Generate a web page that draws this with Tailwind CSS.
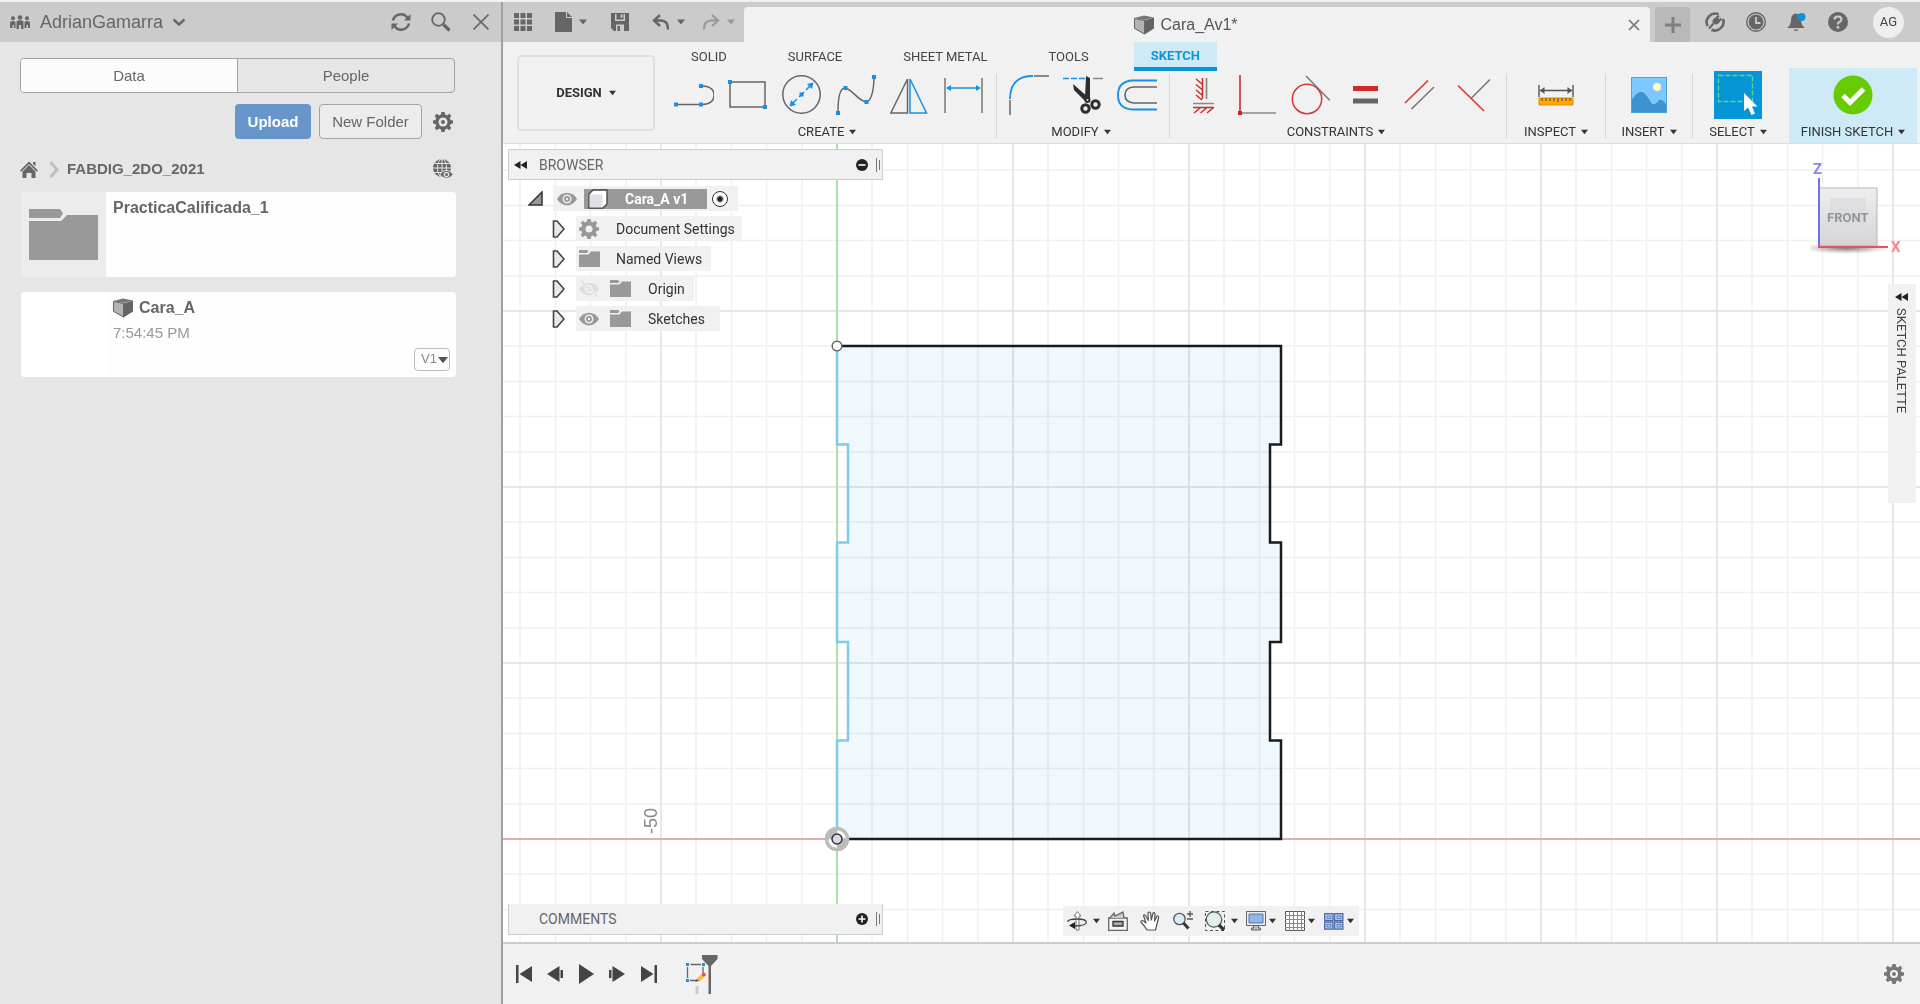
<!DOCTYPE html>
<html lang="en">
<head>
<meta charset="utf-8">
<meta name="viewport" content="width=device-width, initial-scale=1">
<title>Cara_A v1</title>
<script src="https://cdn.jsdelivr.net/npm/@tailwindcss/browser@4"></script>
</head>
<body class="flex min-h-screen bg-[#f1f1f1] pt-[2px] font-['Roboto','Liberation_Sans',sans-serif] text-sm text-[#333]">

<!-- Shared icon shapes -->
<svg class="hidden">
  <symbol id="caret" viewBox="0 0 8 6"><path d="M0 0.5H8L4 5.5Z" fill="currentColor"/></symbol>
  <symbol id="part" viewBox="0 0 20 20"><path d="M0 3L10 0.5L20 2.5L10.5 5Z" fill="#777"/><path d="M0 3L10.5 5.5V19.5L0 13.5Z" fill="#b3b3b3"/><path d="M10.5 5.5L20 2.5V13.5L10.5 19.5Z" fill="#636363"/><path d="M0.5 3.5L10.5 5.5V19L0.5 13.2Z" fill="none" stroke="#666"/></symbol>
  <symbol id="gear" viewBox="0 0 20 20"><path d="M8.4 0h3.2l.5 2.6 1.8.8 2.3-1.6 2.1 2.2-1.5 2.2.7 1.8 2.5.5v3l-2.5.5-.7 1.8 1.5 2.2-2.1 2.2-2.3-1.6-1.8.8-.5 2.6H8.400l-.5-2.600-1.800-.8-2.300 1.600L1.700 16l1.500-2.200-.7-1.800L0 11.500v-3L2.500 8l.7-1.800L1.700 4l2.100-2.200 2.300 1.600 1.800-.8Z" fill="currentColor"/></symbol>
  <symbol id="eye" viewBox="0 0 20 14"><path d="M0 7C5-1.500 15-1.500 20 7C15 15.500 5 15.500 0 7Z" fill="#999"/><circle cx="10" cy="7" r="4.500" fill="#eee"/><circle cx="10" cy="7" r="3" fill="#999"/><circle cx="10" cy="7" r="1.200" fill="#eee"/></symbol>
  <symbol id="folder" viewBox="0 0 21 17"><path d="M0 0H8L9.500 1.500L8 3H0Z" fill="#999"/><path d="M0 4.500H9.500L12 1.500H21V17H0Z" fill="#999"/></symbol>
  <symbol id="expand" viewBox="0 0 13 18"><path d="M1.500 1H5L12 9L5 17H1.500Z" fill="#e8e8ee" stroke="#444" stroke-width="1.600"/></symbol>
  <symbol id="rewind" viewBox="0 0 13 8"><path d="M6.500 0V8L0 4ZM13 0V8L6.500 4Z" fill="#222"/></symbol>
</svg>

<!-- Data panel -->
<aside class="flex w-[503px] shrink-0 flex-col border-r-2 border-[#a0a0a0] bg-[#e6e6e6] font-['Liberation_Sans',sans-serif] text-[15px] text-[#666]">
  <header class="flex h-10 items-center bg-[#cbcbcb] pr-3 pl-[10px]">
    <svg class="h-[14px] w-5" viewBox="0 0 20 14" fill="#666"><circle cx="10" cy="2.500" r="2.300"/><circle cx="3" cy="3.300" r="2"/><circle cx="17" cy="3.300" r="2"/><path d="M6.500 6.500Q10 4 13.500 6.500V14H11V10H9V14H6.500ZM0 7Q3 5 5.500 7V13H4V10H2.500V13H0ZM14.500 7Q17 5 20 7V13H18V10H16.500V13H14.500Z"/></svg>
    <button class="ml-[10px] flex items-center gap-[9px] text-lg">AdrianGamarra
      <svg class="h-2 w-[14px]" viewBox="0 0 14 8" fill="none" stroke="#666" stroke-width="2.400"><path d="M1.500 1.500L7 6.500L12.500 1.500"/></svg>
    </button>
    <button class="ml-auto" aria-label="Refresh"><svg class="size-5" viewBox="0 0 20 20" fill="none" stroke="#666" stroke-width="2.400"><path d="M2 8.500A8 8 0 0 1 16.500 6M18 11.500A8 8 0 0 1 3.500 14"/><path d="M19.500 2V8.500H13ZM.5 18V11.500H7Z" fill="#666" stroke="none"/></svg></button>
    <button class="ml-5" aria-label="Search"><svg class="size-5" viewBox="0 0 20 20" fill="none" stroke="#666"><circle cx="7.500" cy="7.500" r="6.300" stroke-width="1.800"/><path d="M12.500 12.500L18.500 18.500" stroke-width="3.200"/></svg></button>
    <button class="ml-[22px]" aria-label="Close panel"><svg class="size-4" viewBox="0 0 16 16" stroke="#666" stroke-width="1.600"><path d="M.5.5L15.500 15.500M15.500.5L.5 15.500"/></svg></button>
  </header>

  <div class="flex flex-col pt-4 pr-[46px] pl-5">
    <div class="flex h-[35px] overflow-hidden rounded border border-[#a3a3a3]">
      <button class="flex-1 bg-[#fcfcfc]">Data</button>
      <button class="flex-1 border-l border-[#a3a3a3]">People</button>
    </div>
    <div class="mt-[11px] flex items-center justify-end gap-2 pr-0.5">
      <button class="h-[35px] w-[76px] rounded bg-[#6996ca] font-bold text-white">Upload</button>
      <button class="h-[35px] w-[103px] rounded border border-[#a3a3a3] bg-[#ececec]">New Folder</button>
      <button class="ml-[3px]" aria-label="Settings"><svg class="size-5"><use href="#gear"/><circle cx="10" cy="10" r="4.500" fill="#e6e6e6"/><circle cx="10" cy="10" r="2" fill="#666"/></svg></button>
    </div>
    <nav class="mt-[18px] flex h-6 items-center pr-0.5 font-bold">
      <a href="#" aria-label="Home"><svg class="h-[17px] w-[18px]" viewBox="0 0 18 17" fill="#666"><path d="M9 .5L18 9.500L16.800 10.700L9 3L1.200 10.700L0 9.500Z"/><path d="M13 1H15.500V5L13 3Z"/><path d="M9 4L15.500 10.500V17H11.500V12H6.500V17H2.500V10.500Z"/></svg></a>
      <svg class="ml-[11px] h-[17px] w-[10px]" viewBox="0 0 10 17" fill="none" stroke="#bfbfbf" stroke-width="3"><path d="M1.500 1L8 8.500L1.500 16"/></svg>
      <a href="#" class="ml-2">FABDIG_2DO_2021</a>
      <button class="ml-auto" aria-label="Web view"><svg class="size-5" viewBox="0 0 20 20"><circle cx="9" cy="9" r="9" fill="#666"/><g fill="none" stroke="#e6e6e6"><ellipse cx="9" cy="9" rx="4.500" ry="9"/><path d="M9 0V18M0 9H18M1.500 4.500H16.500M1.500 13.500H16.500"/></g><path d="M7 15.500C10 10 17 10 20 15.500C17 20.500 10 20.500 7 15.500Z" fill="#666" stroke="#e6e6e6"/><circle cx="13.500" cy="15.500" r="2.800" fill="#e6e6e6"/><circle cx="13.500" cy="15.500" r="1.500" fill="#666"/></svg></button>
    </nav>
    <ul class="mt-[11px] -mr-px ml-px flex flex-col gap-[15px]">
      <li class="flex h-[85px] overflow-hidden rounded-sm bg-[#fdfdfd]">
        <div class="flex w-[85px] items-center justify-center bg-[#ececec]"><svg class="h-[51px] w-[69px]" viewBox="0 0 69 51" fill="#999"><path d="M0 0H31L34 4.500L31 9H0ZM0 12H32L38 6H69V51H0Z"/></svg></div>
        <h2 class="px-[7px] py-1.5 text-base leading-5 font-bold">PracticaCalificada_1</h2>
      </li>
      <li class="flex h-[85px] overflow-hidden rounded-sm bg-[#fdfdfd]">
        <div class="w-[85px] bg-white"></div>
        <div class="flex flex-1 flex-col pt-1.5 pr-1.5 pb-1.5 pl-[7px]">
          <h2 class="flex items-center gap-1.5 text-base leading-5 font-bold"><svg class="size-5"><use href="#part"/></svg>Cara_A</h2>
          <p class="mt-[5px] leading-5 text-[#999]">7:54:45 PM</p>
          <label class="mt-auto ml-auto flex h-[23px] w-9 shrink-0 items-center rounded-sm border border-[#bbb] pl-[6px] text-[13px] text-[#888]">
            <select aria-label="Version" class="w-[17px] appearance-none bg-transparent"><option>V1</option></select>
            <svg class="h-2 w-[10px] text-[#555]"><use href="#caret"/></svg>
          </label>
        </div>
      </li>
    </ul>
  </div>
</aside>

<main class="flex min-w-0 flex-1 flex-col">
  <!-- Application bar -->
  <header class="flex h-10 items-center bg-[#cbcbcb] text-[#666]">
    <div class="flex w-[241px] shrink-0 items-center pl-[11px]">
      <button aria-label="Show data panel"><svg class="size-[18px]" viewBox="0 0 18 18" fill="currentColor"><path d="M0 1a1 1 0 0 1 1-1H5V5H0ZM6.500 0H11.500V5H6.500ZM13 0H17a1 1 0 0 1 1 1V5H13ZM0 6.500H5V11.500H0ZM6.500 6.500H11.500V11.500H6.500ZM13 6.500H18V11.500H13ZM0 13H5V18H1a1 1 0 0 1-1-1ZM6.500 13H11.500V18H6.500ZM13 13H18V17a1 1 0 0 1-1 1H13Z"/></svg></button>
      <button class="ml-[23px] flex items-center gap-[7px]" aria-label="File"><svg class="h-5 w-[17px]" viewBox="0 0 17 20" fill="currentColor"><path d="M0 0H11V6H17V20H0Z"/><path d="M12 0L17 5H12Z"/></svg><svg class="h-1.5 w-2"><use href="#caret"/></svg></button>
      <button class="ml-6" aria-label="Save"><svg class="size-[18px]" viewBox="0 0 18 18"><path d="M0 0H18V18H3L0 15Z" fill="currentColor"/><path d="M4 1H14V8H4ZM5 11.500H13V18H5Z" fill="#cbcbcb"/><path d="M5.500 1H12.500V6.500H5.500ZM6.500 13H9V18H6.500Z" fill="currentColor"/><path d="M9.500 1.500H11.500V4.500H9.500Z" fill="#cbcbcb"/></svg></button>
      <button class="ml-[23px] flex items-center gap-[7px]" aria-label="Undo"><svg class="h-4 w-[18px]" viewBox="0 0 18 16" fill="none" stroke="currentColor" stroke-width="2.500"><path d="M8 1L2 6.500L8 12M2.500 6.500H9Q16 6.500 16 15.500"/></svg><svg class="h-1.5 w-2"><use href="#caret"/></svg></button>
      <button class="ml-[17px] flex items-center gap-[7px] text-[#999]" aria-label="Redo"><svg class="h-4 w-[18px]" viewBox="0 0 18 16" fill="none" stroke="currentColor" stroke-width="2.200"><path d="M10 1L16 6.500L10 12M15.500 6.500H9Q2 6.500 2 15.500"/></svg><svg class="h-1.5 w-2"><use href="#caret"/></svg></button>
    </div>
    <div class="flex h-[35px] flex-1 items-center self-end rounded-t bg-[#f1f1f1] pr-2.5">
      <div class="flex flex-1 items-center justify-center gap-1.5 font-['Liberation_Sans',sans-serif] text-base text-[#555]"><svg class="size-5"><use href="#part"/></svg>Cara_Av1*</div>
      <button aria-label="Close tab"><svg class="size-3" viewBox="0 0 12 12" stroke="#777" stroke-width="1.700"><path d="M1 1L11 11M11 1L1 11"/></svg></button>
    </div>
    <button class="ml-[5px] flex h-[35px] w-[35px] items-center justify-center self-end rounded-t bg-[#b9b9b9]" aria-label="New tab"><svg class="size-4" viewBox="0 0 16 16" stroke="#808080" stroke-width="3"><path d="M8 0V16M0 8H16"/></svg></button>
    <div class="flex items-center gap-[21px] pr-4 pl-[15px]">
      <button aria-label="Extensions"><svg class="size-5" viewBox="0 0 20 20" fill="none" stroke="currentColor"><path d="M13.500 2.200A8.600 8.600 0 0 0 2.600 14M6.500 17.800A8.600 8.600 0 0 0 18 7" stroke-width="2.600"/><path d="M9 6.500L12 4.500L15.500 8.500L13.500 11.500Q10.500 13.500 8 11Q6.500 8.500 9 6.500Z" fill="currentColor" stroke="none"/><path d="M11.500 6L14 3.500M14 9L16.500 6.500M8.500 11.500L4 16.500" stroke-width="2"/></svg></button>
      <button aria-label="Job status"><svg class="size-5" viewBox="0 0 20 20"><circle cx="10" cy="10" r="9.300" fill="none" stroke="currentColor" stroke-width="1.400"/><circle cx="10" cy="10" r="7.400" fill="currentColor"/><path d="M10 5V11H14.500" fill="none" stroke="#cbcbcb" stroke-width="1.800"/></svg></button>
      <button aria-label="Notifications"><svg class="size-5" viewBox="0 0 20 20"><path d="M9 1.500Q14 2 14 8Q14 13 18 16H0Q4 13 4 8Q4 2 9 1.500ZM6.500 17.500H11.500Q9 20.500 6.500 17.500Z" fill="currentColor"/><circle cx="14.500" cy="5" r="4" fill="#0696d7"/></svg></button>
      <button aria-label="Help"><svg class="size-5" viewBox="0 0 20 20"><circle cx="10" cy="10" r="10" fill="currentColor"/><path d="M6.500 7.500Q6.500 4.500 10 4.500T13.500 7.500Q13.500 9 11.500 10T10 12.500" fill="none" stroke="#cbcbcb" stroke-width="2.200"/><circle cx="10" cy="15.300" r="1.400" fill="#cbcbcb"/></svg></button>
      <button class="ml-1 size-[31px] rounded-full bg-[#eee] text-[13px] text-[#444]">AG</button>
    </div>
  </header>

  <!-- Ribbon -->
  <div class="flex h-[102px] shrink-0 overflow-hidden border-b border-[#ddd] bg-[#f1f1f1]">
    <button class="mt-[13px] ml-[14px] flex h-[76px] w-[138px] shrink-0 items-center justify-center gap-[7px] rounded border-2 border-[#e0e0e0] text-[13px] font-bold">DESIGN <svg class="h-1.5 w-[7px]"><use href="#caret"/></svg></button>
    <div class="ml-3 flex flex-1 flex-col text-[13px]">
      <nav class="ml-2 flex h-[30px] gap-[29px] text-[#444]">
        <a href="#" class="flex items-center px-4 pt-px">SOLID</a>
        <a href="#" class="flex items-center px-4 pt-px">SURFACE</a>
        <a href="#" class="flex items-center px-4 pt-px">SHEET METAL</a>
        <a href="#" class="flex items-center px-4 pt-px">TOOLS</a>
        <a href="#" class="flex items-center border-b-4 border-[#0696d7] bg-[#cdeaf6] px-[17px] pt-1 font-bold text-[#0b98d9]">SKETCH</a>
      </nav>
      <div class="flex flex-1">
        <section class="w-[324px] shrink-0">
          <div class="flex h-12 items-center">
            <button class="flex w-[54px] justify-center" aria-label="Line"><svg class="size-10" viewBox="0 0 40 40"><path d="M2 29.500H27Q40 29.500 40 20Q40 11 27 11" fill="none" stroke="#666" stroke-width="1.500"/><path d="M0 27.500h4v4h-4zM25 27.500h4v4h-4zM25 9h4v4h-4z" fill="#1890e8"/></svg></button>
            <button class="flex w-[54px] justify-center" aria-label="Rectangle"><svg class="size-10" viewBox="0 0 40 40"><path d="M2 7H37V32H2Z" fill="none" stroke="#666" stroke-width="1.500"/><path d="M0 5h4v4H0zM35 30h4v4h-4z" fill="#1890e8"/></svg></button>
            <button class="flex w-[54px] justify-center" aria-label="Circle"><svg class="size-10" viewBox="0 0 40 40"><circle cx="19.500" cy="19.500" r="18.700" fill="none" stroke="#666" stroke-width="1.500"/><path d="M10 29L29 10" stroke="#1890e8" stroke-width="1.500" stroke-dasharray="7 3"/><path d="M31.500 7.500L30 14L25 9ZM7.500 31.500L9 25L14 30ZM17.500 17.500h4v4h-4z" fill="#1890e8"/></svg></button>
            <button class="flex w-[54px] justify-center" aria-label="Spline"><svg class="size-10" viewBox="0 0 40 40"><path d="M2 37Q2 13 9 13C15 13 21 25 30 27Q37 26 38 4" fill="none" stroke="#666" stroke-width="1.500"/><path d="M0 36h4v4H0zM7.500 11h4v4h-4zM28.500 25h4v4h-4zM36 0h4v4h-4z" fill="#1890e8"/></svg></button>
            <button class="flex w-[54px] justify-center" aria-label="Mirror"><svg class="size-10" viewBox="0 0 40 40" fill="none" stroke-width="1.500"><path d="M17.500 4V38H0.800Z" stroke="#666"/><path d="M20 4V38H36.500Z" stroke="#1890e8"/></svg></button>
            <button class="flex w-[54px] justify-center" aria-label="Sketch dimension"><svg class="size-10" viewBox="0 0 40 40"><path d="M1 3V38M38 3V38" stroke="#777" stroke-width="1.500"/><path d="M4 13H35" stroke="#1890e8" stroke-width="1.500"/><path d="M2 13L7 10V16ZM37 13L32 10V16Z" fill="#1890e8"/></svg></button>
          </div>
          <button class="flex h-6 w-full items-center justify-center gap-[5px] pt-0.5 pr-1">CREATE <svg class="h-1.5 w-[7px]"><use href="#caret"/></svg></button>
        </section>
        <div class="mx-[5px] mt-[3px] mb-[5px] w-px shrink-0 bg-[#d8d8d8]"></div>
        <section class="w-[162px] shrink-0">
          <div class="flex h-12 items-center">
            <button class="flex w-[54px] justify-center" aria-label="Fillet"><svg class="size-10" viewBox="0 0 40 40" fill="none" stroke-width="1.500"><path d="M1 24Q1 1 24 1" stroke="#1890e8" stroke-width="1.800"/><path d="M25 1H40M1 25V40" stroke="#666"/></svg></button>
            <button class="flex w-[54px] justify-center" aria-label="Trim"><svg class="size-10" viewBox="0 0 40 40" fill="none"><path d="M0 3.500H25" stroke="#1890e8" stroke-width="1.700" stroke-dasharray="6 2"/><path d="M30 3.500H40" stroke="#888" stroke-width="1.500"/><path d="M23 1L27 3V25L22 23ZM10 9L26 23L23 27L11 15Z" fill="#2d2d2d"/><circle cx="22.500" cy="33.500" r="3.700" stroke="#2d2d2d" stroke-width="3"/><circle cx="32.500" cy="29.500" r="3.700" stroke="#2d2d2d" stroke-width="3"/><circle cx="24.500" cy="25" r="3" fill="#2d2d2d"/><circle cx="24.500" cy="25" r="1" fill="#ddd"/></svg></button>
            <button class="flex w-[54px] justify-center" aria-label="Offset"><svg class="size-10" viewBox="0 0 40 40" fill="none" stroke-width="1.600"><path d="M40 5.500H16Q1 6 1 20T16 34.500H40" stroke="#1890e8" stroke-width="1.900"/><path d="M40 12H17Q8 12.500 8 20T17 28H40" stroke="#666"/></svg></button>
          </div>
          <button class="flex h-6 w-full items-center justify-center gap-[5px] pt-0.5 pr-1">MODIFY <svg class="h-1.5 w-[7px]"><use href="#caret"/></svg></button>
        </section>
        <div class="mx-[5px] mt-[3px] mb-[5px] w-px shrink-0 bg-[#d8d8d8]"></div>
        <section class="w-[326px] shrink-0">
          <div class="flex h-12 items-center">
            <button class="flex w-[54px] justify-center" aria-label="Fix"><svg class="size-10" viewBox="0 0 40 40" fill="none" stroke="#cf2a27" stroke-width="1.500"><path d="M20.500 3V24M14 4L20 9M14 9.500L20 14.500M14 15L20 20M14 20L20 25M11 32.500H32M18 33L12 38M24.500 33L18.500 38M31 33L25 38"/><path d="M24.500 3V24M11 28.500H32" stroke="#888" stroke-width="1.700"/></svg></button>
            <button class="flex w-[54px] justify-center" aria-label="Horizontal/Vertical"><svg class="size-10" viewBox="0 0 40 40"><path d="M4 0V36" stroke="#d33" stroke-width="1.700"/><path d="M6 38H40" stroke="#888" stroke-width="1.700"/><path d="M2 36h4v4H2z" fill="#cf2222"/></svg></button>
            <button class="flex w-[54px] justify-center" aria-label="Tangent"><svg class="size-10" viewBox="0 0 40 40" fill="none" stroke-width="1.500"><circle cx="17" cy="24" r="14.700" stroke="#d33a3a"/><path d="M16 1L40 25.500" stroke="#777"/></svg></button>
            <button class="flex w-[54px] justify-center" aria-label="Equal"><svg class="size-10" viewBox="0 0 40 40"><path d="M9 11h25v5H9z" fill="#cf2a27"/><path d="M9 23.500h25v5H9z" fill="#666"/></svg></button>
            <button class="flex w-[54px] justify-center" aria-label="Parallel"><svg class="size-10" viewBox="0 0 40 40" stroke-width="1.600"><path d="M7 28L30 5.500" stroke="#d33"/><path d="M13.500 34L36 12" stroke="#777"/></svg></button>
            <button class="flex w-[54px] justify-center" aria-label="Perpendicular"><svg class="size-10" viewBox="0 0 40 40" stroke-width="1.600"><path d="M6 10.500L32 36" stroke="#d33"/><path d="M19.500 23L38 4.500" stroke="#777"/></svg></button>
          </div>
          <button class="flex h-6 w-full items-center justify-center gap-[5px] pt-0.5 pr-1">CONSTRAINTS <svg class="h-1.5 w-[7px]"><use href="#caret"/></svg></button>
        </section>
        <div class="mx-[5px] mt-[3px] mb-[5px] w-px shrink-0 bg-[#d8d8d8]"></div>
        <button class="w-[88px] shrink-0">
          <span class="flex h-12 items-center justify-center"><svg class="size-10" viewBox="0 0 40 40"><path d="M3 10V22M37 10V22M4 15.500H36" stroke="#555" stroke-width="1.400"/><path d="M4 15.500L8.500 12V19ZM36 15.500L31.500 12V19Z" fill="#555"/><path d="M3 23h34v7H3z" fill="#ffa800" stroke="#e29100"/><path d="M6 23v3M10 23v3M14 23v3M18 23v3M22 23v4M26 23v3M30 23v3M34 23v3" stroke="#444"/></svg></span>
          <span class="flex h-6 items-center justify-center gap-[5px] pt-0.5">INSPECT <svg class="h-1.5 w-[7px]"><use href="#caret"/></svg></span>
        </button>
        <div class="mx-[5px] mt-[3px] mb-[5px] w-px shrink-0 bg-[#d8d8d8]"></div>
        <button class="w-[76px] shrink-0">
          <span class="flex h-12 items-center justify-center"><svg class="size-9" viewBox="0 0 36 36"><path d="M0 0h36v36H0z" fill="#7cc8ff"/><path d="M0 24Q6 14 11 15Q14 15 21 27Q25 28 28 23Q31 22 36 28V36H0Z" fill="#3d93cf"/><circle cx="26" cy="10" r="4" fill="#fdfbd0"/><path d="M.5.5h35v35H.5z" fill="none" stroke="#4aa3dd"/></svg></span>
          <span class="flex h-6 items-center justify-center gap-[5px] pt-0.5">INSERT <svg class="h-1.5 w-[7px]"><use href="#caret"/></svg></span>
        </button>
        <div class="mx-[5px] mt-[3px] mb-[5px] w-px shrink-0 bg-[#d8d8d8]"></div>
        <button class="w-[80px] shrink-0">
          <span class="flex h-12 items-center justify-center"><svg class="size-12" viewBox="0 0 48 48"><path d="M0 0h48v48H0z" fill="#0696d7"/><path d="M4.500 4.500h34v26h-34z" fill="none" stroke="#5cd78a" stroke-width="1.400" stroke-dasharray="5 2"/><path d="M30 22V40L34 36.500L37.500 44L41 42.500L38 35.500H43.500Z" fill="#fff"/></svg></span>
          <span class="flex h-6 items-center justify-center gap-[5px] pt-0.5">SELECT <svg class="h-1.5 w-[7px]"><use href="#caret"/></svg></span>
        </button>
        <button class="-mt-[3px] mr-[3px] ml-auto w-[128px] shrink-0 bg-[#cdeaf6] pt-[3px]">
          <span class="flex h-12 items-center justify-center"><svg class="size-10" viewBox="0 0 40 40"><circle cx="20" cy="20" r="19.500" fill="#66cc00"/><path d="M10 20.500L17 27.500L30.500 14" fill="none" stroke="#fff" stroke-width="5"/></svg></span>
          <span class="flex h-6 items-center justify-center gap-[5px] pt-0.5">FINISH SKETCH <svg class="h-1.5 w-[7px]"><use href="#caret"/></svg></span>
        </button>
      </div>
    </div>
  </div>

  <!-- Modelling canvas -->
  <div class="relative min-h-[640px] flex-1 overflow-hidden bg-white">
    <svg class="absolute inset-0 size-full">
      <defs>
        <pattern id="grid" width="176" height="176" patternUnits="userSpaceOnUse" patternTransform="translate(333 694)">
          <path d="M36 0V176M71.500 0V176M106.500 0V176M142 0V176M0 36H176M0 71.500H176M0 106.500H176M0 142H176" stroke="#f0f0f0" stroke-width="1.500"/>
          <path d="M1 0V176M0 1H176" stroke="#e0e0e0" stroke-width="1.500"/>
        </pattern>
      </defs>
      <path d="M334 202H778V300.500H767V398.500H778V498H767V596.500H778V695H334V596.500H345V498H334V398.500H345V300.500H334Z" fill="#f0f8fe"/>
      <rect width="100%" height="100%" fill="url(#grid)" class="mix-blend-multiply"/>
      <path d="M334 0V798" stroke="#96e296" stroke-width="1.500"/>
      <path d="M0 695H1417" stroke="#d87878" stroke-width="1.200"/>
      <path d="M334 202V300.500H345V398.500H334V498H345V596.500H334V695" fill="none" stroke="#7fcbea" stroke-width="2.500"/>
      <path d="M334 202H778V300.500H767V398.500H778V498H767V596.500H778V695H334" fill="none" stroke="#1a1a1a" stroke-width="2.500"/>
      <circle cx="334" cy="202" r="4.800" fill="#fff" stroke="#666" stroke-width="1.500"/>
      <circle cx="334" cy="695" r="10.500" fill="#fff" fill-opacity=".8" stroke="#bbb" stroke-width="3.500"/>
      <path d="M334 695H346A12 12 0 0 1 334 707ZM334 695H322A12 12 0 0 1 334 683Z" fill="#bbb"/>
      <circle cx="334" cy="695" r="5" fill="#ddd6e6" stroke="#3a3340" stroke-width="1.500"/>
      <text transform="translate(154 690) rotate(-90)" font-size="18" fill="#888" font-family="Liberation Sans, sans-serif">-50</text>
    </svg>

    <!-- Browser tree -->
    <section class="absolute top-[5px] left-[5px] w-[375px] text-[#333]">
      <header class="flex h-[31px] items-center border border-[#ccc] bg-[#f1f1f1] pr-[1px] pl-[5px]">
        <svg class="h-2 w-[13px]"><use href="#rewind"/></svg>
        <h2 class="ml-3 text-[#666]">BROWSER</h2>
        <button class="ml-auto" aria-label="Collapse"><svg class="size-3" viewBox="0 0 12 12"><circle cx="6" cy="6" r="6" fill="#222"/><path d="M2.500 6H9.500" stroke="#fff" stroke-width="1.600"/></svg></button>
        <svg class="ml-2 h-[14px] w-[5px]" viewBox="0 0 5 14" stroke="#777"><path d="M.5 0V14M3.500 2V12"/></svg>
      </header>
      <ul class="flex flex-col gap-[5px] pt-1.5">
        <li class="flex h-[25px] items-center pl-5">
          <svg class="h-[15px] w-[15px]" viewBox="0 0 15 15"><path d="M14 1V14H1Z" fill="#999" stroke="#333" stroke-width="1.500"/></svg>
          <div class="ml-[10px] flex h-full items-center bg-[#f1f1f1] pr-2.5 pl-1">
            <svg class="h-[14px] w-5"><use href="#eye"/></svg>
            <button class="ml-[7px] flex h-5 w-[123px] items-center bg-[#999] pl-1 font-bold text-white"><svg class="size-5" viewBox="0 0 20 20" stroke="#444" stroke-width="1.300" stroke-linejoin="round"><path d="M1 5L5 1H19V15L15 19H1Z" fill="#fff"/><path d="M1.700 5.500H14.500V18.400H1.700Z" fill="#e0e0e8" stroke="none"/></svg><span class="ml-[17px]">Cara_A v1</span></button>
            <input type="radio" checked aria-label="Activate component" class="ml-[5px] size-4 appearance-none rounded-full border border-[#333] bg-white bg-[radial-gradient(circle,#222_2px,transparent_4px)]">
          </div>
        </li>
        <li class="flex h-[25px] items-center pl-[44px]">
          <svg class="h-[18px] w-[13px]"><use href="#expand"/></svg>
          <div class="ml-[11px] flex h-full items-center bg-[#f1f1f1] pr-[7px] pl-[3px]"><svg class="size-5 text-[#999]"><use href="#gear"/><circle cx="10" cy="10" r="3.500" fill="#f1f1f1"/></svg><span class="ml-[17px]">Document Settings</span></div>
        </li>
        <li class="flex h-[25px] items-center pl-[44px]">
          <svg class="h-[18px] w-[13px]"><use href="#expand"/></svg>
          <div class="ml-[11px] flex h-full items-center bg-[#f1f1f1] pr-[9px] pl-[3px]"><svg class="h-[17px] w-[21px]"><use href="#folder"/></svg><span class="ml-4">Named Views</span></div>
        </li>
        <li class="flex h-[25px] items-center pl-[44px]">
          <svg class="h-[18px] w-[13px]"><use href="#expand"/></svg>
          <div class="ml-[11px] flex h-full items-center bg-[#f1f1f1] pr-[9px] pl-[3px]"><svg class="h-4 w-5" viewBox="0 0 20 16"><path d="M0 8C5-.5 15-.5 20 8C15 16.500 5 16.500 0 8Z" fill="#ddd"/><circle cx="10" cy="8" r="3.500" fill="none" stroke="#f1f1f1" stroke-width="1.500"/><path d="M2 0L19 16" stroke="#f1f1f1" stroke-width="4"/><path d="M2 0L19 16" stroke="#ddd" stroke-width="1.500"/></svg><svg class="ml-[11px] h-[17px] w-[21px]"><use href="#folder"/></svg><span class="ml-[17px]">Origin</span></div>
        </li>
        <li class="flex h-[25px] items-center pl-[44px]">
          <svg class="h-[18px] w-[13px]"><use href="#expand"/></svg>
          <div class="ml-[11px] flex h-full items-center bg-[#f1f1f1] pr-[15px] pl-[3px]"><svg class="h-[14px] w-5"><use href="#eye"/></svg><svg class="ml-[11px] h-[17px] w-[21px]"><use href="#folder"/></svg><span class="ml-[17px]">Sketches</span></div>
        </li>
      </ul>
    </section>

    <!-- View cube -->
    <svg class="absolute top-[15px] right-[15px] h-[115px] w-[95px] font-['Roboto',sans-serif] font-bold" viewBox="-5 -5 95 115">
      <defs>
        <linearGradient id="face" x2="0" y2="1"><stop stop-color="#efefef"/><stop offset="1" stop-color="#d4d4d4"/></linearGradient>
        <radialGradient id="shade"><stop stop-color="#777"/><stop offset="1" stop-color="#999" stop-opacity="0"/></radialGradient>
      </defs>
      <ellipse cx="31" cy="84" rx="44" ry="6" fill="url(#shade)"/>
      <path d="M4 24h58v58H4z" fill="url(#face)" stroke="#b5b5b5"/>
      <path d="M15 34h36v37H15z" fill="#d8dbe0" opacity=".7"/>
      <text x="12" y="58" font-size="13" fill="#92969b">FRONT</text>
      <path d="M4 14V83" stroke="#7070ee" stroke-width="2"/>
      <path d="M3 83H73" stroke="#e65555" stroke-width="2"/>
      <text x="-2" y="10" font-size="15" fill="#8484ff">Z</text>
      <text x="76" y="88" font-size="15" fill="#ff8484">X</text>
    </svg>

    <!-- Sketch palette, docked -->
    <button class="absolute top-[140px] right-1 flex h-[219px] w-7 items-center gap-[7px] bg-[#f1f1f1] pt-[9px] pr-0.5 text-[13px] text-[#444] [writing-mode:vertical-rl]">
      <svg class="h-2 w-[13px]"><use href="#rewind"/></svg>
      SKETCH PALETTE
    </button>

    <section class="absolute bottom-[7px] left-[5px] flex h-[31px] w-[375px] items-center border border-t-0 border-[#ccc] bg-[#f1f1f1] pr-[1px] pl-[30px]">
      <h2 class="text-[#666]">COMMENTS</h2>
      <button class="ml-auto" aria-label="Add comment"><svg class="size-3" viewBox="0 0 12 12"><circle cx="6" cy="6" r="6" fill="#222"/><path d="M2.500 6H9.500M6 2.500V9.500" stroke="#fff" stroke-width="1.600"/></svg></button>
      <svg class="ml-2 h-[14px] w-[5px]" viewBox="0 0 5 14" stroke="#777"><path d="M.5 0V14M3.500 2V12"/></svg>
    </section>

    <!-- Navigation bar -->
    <nav class="absolute bottom-1.5 left-[560px] flex h-[30px] w-[296px] items-center bg-[#f1f1f1] pl-1" aria-label="Navigation">
      <button class="flex items-center gap-1.5" aria-label="Orbit"><svg class="size-5" viewBox="0 0 20 20" fill="none" stroke="#444" stroke-width="1.300"><path d="M9 19V5H7L10.500 .7L14 5H12V19Z" fill="#fff" stroke="#777" stroke-width="1"/><path d="M8 15Q19.300 14.500 19.300 11.500Q19.300 8 10.500 8Q.7 8 .7 11"/><path d="M8 11L2 14.500L8 18Z" fill="#222" stroke="none"/></svg><svg class="h-1.5 w-[7px]"><use href="#caret"/></svg></button>
      <button class="ml-2" aria-label="Look at"><svg class="size-5" viewBox="0 0 20 20" fill="none" stroke="#666" stroke-width="1.300"><path d="M.7 7H19.300V19.300H.7Z" fill="#f6f6f6"/><path d="M2 7L6 2L7 5L15 1L16 7" fill="#ccc"/><path d="M5 10.500h10v4.500H5z" fill="#aab" stroke="#333"/></svg></button>
      <button class="ml-3" aria-label="Pan"><svg class="size-5" viewBox="0 0 20 20" fill="#fff" stroke="#555" stroke-width="1.200" stroke-linejoin="round"><path d="M7 19Q4 14 .8 11Q.8 9 3.500 10L6 12L3.500 4.500Q4.500 3 5.800 5L8.300 9.500L8 1.800Q9 .2 10.500 1.800L11.300 9L13 2Q14.500 .8 15 3L14.500 10L17 5Q19 4.500 18.500 7L16.500 15L15.500 19Z"/></svg></button>
      <button class="ml-[13px]" aria-label="Zoom"><svg class="size-5" viewBox="0 0 20 20" fill="none" stroke="#555"><circle cx="6.500" cy="8" r="5.700" fill="#d8eef2" stroke-width="1.300"/><path d="M10.500 12L15.500 17.500" stroke="#333" stroke-width="3"/><path d="M17 0V6M14 3H20M14 8H20" stroke-width="1.300"/></svg></button>
      <button class="ml-3 flex items-center gap-1.5" aria-label="Fit"><svg class="size-5" viewBox="0 0 20 20" fill="none" stroke="#555"><path d="M.5.5H19.500V19.500H.5Z" stroke-dasharray="3 2.500"/><circle cx="9" cy="8.500" r="7.700" fill="#dff0ee" stroke-width="1.200"/><path d="M14 14L19 19" stroke="#333" stroke-width="3.200"/></svg><svg class="h-1.5 w-[7px]"><use href="#caret"/></svg></button>
      <button class="ml-2 flex items-center gap-[3px]" aria-label="Display settings"><svg class="size-5" viewBox="0 0 20 20" stroke="#666"><path d="M.5.5h19v14H.5z" fill="#eee"/><path d="M3 3h14v9H3z" fill="#8fb8e6" stroke="#5577aa"/><path d="M7.500 14.500h5v2.500h2v2h-9v-2h2z" fill="#bbb"/></svg><svg class="h-1.5 w-[7px]"><use href="#caret"/></svg></button>
      <button class="ml-[9px] flex items-center gap-[3px]" aria-label="Grid and snaps"><svg class="size-5" viewBox="0 0 20 20" fill="none" stroke="#888"><path d="M.5.5h19v19H.5z" fill="#fff" stroke="#555"/><path d="M4.500 0V20M8.500 0V20M12.500 0V20M16.500 0V20M0 4.500H20M0 8.500H20M0 12.500H20M0 16.500H20"/></svg><svg class="h-1.5 w-[7px]"><use href="#caret"/></svg></button>
      <button class="ml-[9px] flex items-center gap-[3px]" aria-label="Viewports"><svg class="h-[17px] w-5" viewBox="0 0 20 17" fill="#a9c6ec" stroke="#4a6ba6" stroke-width="1.200"><path d="M.6.600h8.400v7H.6zM10.500.6h8.400v7h-8.400zM.6 9.200h8.400v7H.6zM10.500 9.200h8.400v7h-8.400z"/><path d="M3 3h4v2.500H3zM13 3h4v2.500h-4zM3 11.500h4V14H3zM13 11.500h4V14h-4z" stroke-width=".7"/></svg><svg class="h-1.5 w-[7px]"><use href="#caret"/></svg></button>
    </nav>
  </div>

  <!-- Timeline -->
  <footer class="flex h-[62px] shrink-0 items-center border-t-2 border-[#ccc] bg-[#f1f1f1] pr-4 pl-[13px] text-[#444]">
    <button aria-label="Go to start"><svg class="h-[18px] w-4" viewBox="0 0 16 18" fill="currentColor"><path d="M0 0h2.500v18H0zM16 1V17L3.500 9Z"/></svg></button>
    <button class="ml-[15px]" aria-label="Step back"><svg class="h-[18px] w-4" viewBox="0 0 16 18" fill="currentColor"><path d="M12.500 1V17L0 9ZM13.500 5h2.500v8h-2.500z"/></svg></button>
    <button class="ml-4" aria-label="Play"><svg class="h-5 w-[15px]" viewBox="0 0 15 20" fill="currentColor"><path d="M0 0L15 10L0 20Z"/></svg></button>
    <button class="ml-[15px]" aria-label="Step forward"><svg class="h-[18px] w-4" viewBox="0 0 16 18" fill="currentColor"><path d="M3.500 1V17L16 9ZM0 5h2.500v8H0z"/></svg></button>
    <button class="ml-4" aria-label="Go to end"><svg class="h-[18px] w-4" viewBox="0 0 16 18" fill="currentColor"><path d="M13.500 0h2.500v18h-2.500zM0 1V17L12.500 9Z"/></svg></button>
    <button class="ml-[28px]" aria-label="Sketch1"><svg class="h-10 w-[33px]" viewBox="0 0 33 40"><path d="M5.500 10.500H16M2.500 13V24M5 26.500H11M18 13V19" fill="none" stroke="#666" stroke-width="1.300"/><path d="M1 9h3v3H1zM17 9h3v3h-3zM1 25h3v3H1z" fill="#1890e8"/><path d="M11 28L12 24.500L17 19.500L20 22.500L15 27Z" fill="#fcb941"/><circle cx="18.800" cy="20.600" r="2" fill="#f05050"/><path d="M10 27.500L12 25L13.500 27Z" fill="#444"/><path d="M10.500 32h3v8h-3z" fill="#ccc"/><path d="M17 1H32.500V5L26 12V40H23.500V12L17 5Z" fill="#666"/></svg></button>
    <button class="ml-auto" aria-label="Timeline settings"><svg class="size-5 text-[#777]"><use href="#gear"/><circle cx="10" cy="10" r="4" fill="#f1f1f1"/><circle cx="10" cy="10" r="2" fill="#777"/></svg></button>
  </footer>
</main>
</body>
</html>
